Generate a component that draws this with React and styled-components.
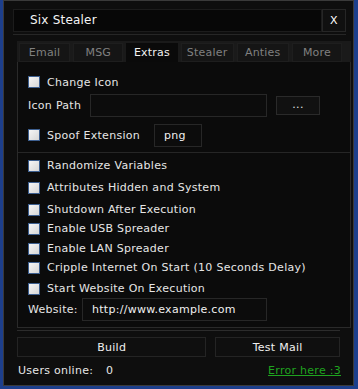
import React from 'react';
import styled, { createGlobalStyle } from 'styled-components';

const Global = createGlobalStyle`
    html, body {
        margin: 0;
        padding: 0;
        background: #1d3f8c;
        width: 358px;
        height: 389px;
        overflow: hidden;
    }
    * {
        box-sizing: border-box;
    }
`;

const Window = styled.div`
    margin-left: 3px;
    width: 351px;
    height: 386px;
    background: #0e0e0e;
    border: 1px solid #3a3a3a;
    padding: 8px 2px 0 9px;
    font-family: 'DejaVu Sans', Verdana, sans-serif;
    font-size: 11px;
    letter-spacing: 0.28px;
    color: #e6e6e6;
    display: flex;
    flex-direction: column;
`;

const TitleRow = styled.div`
    display: flex;
    height: 26px;
    margin-right: 5px;
    padding-bottom: 2px;
    border-bottom: 1px solid #262626;
`;

const TitleBox = styled.div`
    flex: 1;
    background: #070707;
    border: 1px solid #1c1c1c;
    color: #f4f4f4;
    font-size: 12px;
    letter-spacing: 0.2px;
    line-height: 20px;
    padding-left: 16px;
`;

const CloseButton = styled.div`
    width: 24px;
    background: #101010;
    border: 1px solid #262626;
    color: #fff;
    font-size: 11px;
    display: flex;
    align-items: center;
    justify-content: center;
`;

const Content = styled.div`
    margin-top: 6px;
    margin-left: 4px;
    display: flex;
    flex-direction: column;
`;

const TabStrip = styled.div`
    display: flex;
    gap: 3px;
    background: #1a1a1a;
    padding: 2px 9px 0 2px;
    height: 21px;
`;

const Tab = styled.div`
    width: ${p => p.w}px;
    background: ${p => (p.active ? '#0a0a0a' : '#151515')};
    color: ${p => (p.active ? '#f2f2f2' : '#808080')};
    border: 1px solid ${p => (p.active ? '#0a0a0a' : '#1e1e1e')};
    font-size: 11px;
    letter-spacing: 0.2px;
    display: flex;
    align-items: center;
    justify-content: center;
`;

const Panel = styled.div`
    height: 266px;
    background: #0b0b0b;
    border: 1px solid #2a2a2a;
    border-top: none;
    padding: 10px 0 0 10px;
    display: flex;
    flex-direction: column;
`;

const Row = styled.div`
    display: flex;
    align-items: center;
    height: ${p => p.h || 19}px;
    margin-top: ${p => p.mt || 0}px;
    gap: ${p => p.gap || 0}px;
    flex: none;
`;

const Box = styled.span`
    width: 12px;
    height: 12px;
    border: 1px solid #3d5f8f;
    background: linear-gradient(135deg, #f6f6f6, #d6d6d6);
    margin-right: 7px;
    flex: none;
`;

const Label = styled.span`
    color: #e6e6e6;
    white-space: nowrap;
    width: ${p => (p.w ? `${p.w}px` : 'auto')};
    flex: none;
`;

const Input = styled.div`
    width: ${p => p.w}px;
    height: 23px;
    background: #0c0c0c;
    border: 1px solid #272727;
    color: #f0f0f0;
    padding-left: ${p => p.pad || 9}px;
    display: flex;
    align-items: center;
`;

const SmallButton = styled.div`
    width: 44px;
    height: 19px;
    background: #111;
    border: 1px solid #2a2a2a;
    color: #e0e0e0;
    display: flex;
    align-items: center;
    justify-content: center;
    padding-bottom: 3px;
`;

const Divider = styled.div`
    height: 1px;
    background: #262626;
    margin: 1px 0 3px -10px;
    flex: none;
`;

const ButtonRow = styled.div`
    display: flex;
    gap: 9px;
    padding-top: 6px;
    border-top: 1px solid #2c2c2c;
    margin-top: 2px;
    margin-right: 11px;
`;

const BigButton = styled.div`
    width: ${p => p.w}px;
    height: 20px;
    background: #0f0f0f;
    border: 1px solid #242424;
    color: #f0f0f0;
    display: flex;
    align-items: center;
    justify-content: center;
`;

const Footer = styled.div`
    display: flex;
    align-items: center;
    height: 27px;
    padding: 0 10px 0 1px;
`;

const ErrorLink = styled.a`
    margin-left: auto;
    color: #1fa31f;
    text-decoration: underline;
`;

const tabs = [
    ['Email', 52],
    ['MSG', 51],
    ['Extras', 52],
    ['Stealer', 54],
    ['Anties', 53],
    ['More', 51],
];

const checks = [
    ['Randomize Variables', 0],
    ['Attributes Hidden and System', 3],
    ['Shutdown After Execution', 3],
    ['Enable USB Spreader', 0],
    ['Enable LAN Spreader', 1],
    ['Cripple Internet On Start (10 Seconds Delay)', 0],
    ['Start Website On Execution', 2],
];

export default function App() {
    return (
        <>
            <Global />
            <Window>
                <TitleRow>
                    <TitleBox>Six Stealer</TitleBox>
                    <CloseButton>X</CloseButton>
                </TitleRow>
                <Content>
                    <TabStrip>
                        {tabs.map(([name, w]) => (
                            <Tab key={name} w={w} active={name === 'Extras'}>
                                {name}
                            </Tab>
                        ))}
                    </TabStrip>
                    <Panel>
                        <Row h={20}>
                            <Box />
                            <Label>Change Icon</Label>
                        </Row>
                        <Row h={27} gap={9}>
                            <Label w={53}>Icon Path</Label>
                            <Input w={177} />
                            <SmallButton>...</SmallButton>
                        </Row>
                        <Row h={32}>
                            <Box />
                            <Label w={107}>Spoof Extension</Label>
                            <Input w={48}>png</Input>
                        </Row>
                        <Divider />
                        {checks.map(([text, mt]) => (
                            <Row key={text} mt={mt}>
                                <Box />
                                <Label>{text}</Label>
                            </Row>
                        ))}
                        <Row h={23}>
                            <Label w={54}>Website:</Label>
                            <Input w={185}>http://www.example.com</Input>
                        </Row>
                    </Panel>
                    <ButtonRow>
                        <BigButton w={190}>Build</BigButton>
                        <BigButton w={125}>Test Mail</BigButton>
                    </ButtonRow>
                    <Footer>
                        <Label w={88}>Users online:</Label>
                        <Label>0</Label>
                        <ErrorLink>Error here :3</ErrorLink>
                    </Footer>
                </Content>
            </Window>
        </>
    );
}
